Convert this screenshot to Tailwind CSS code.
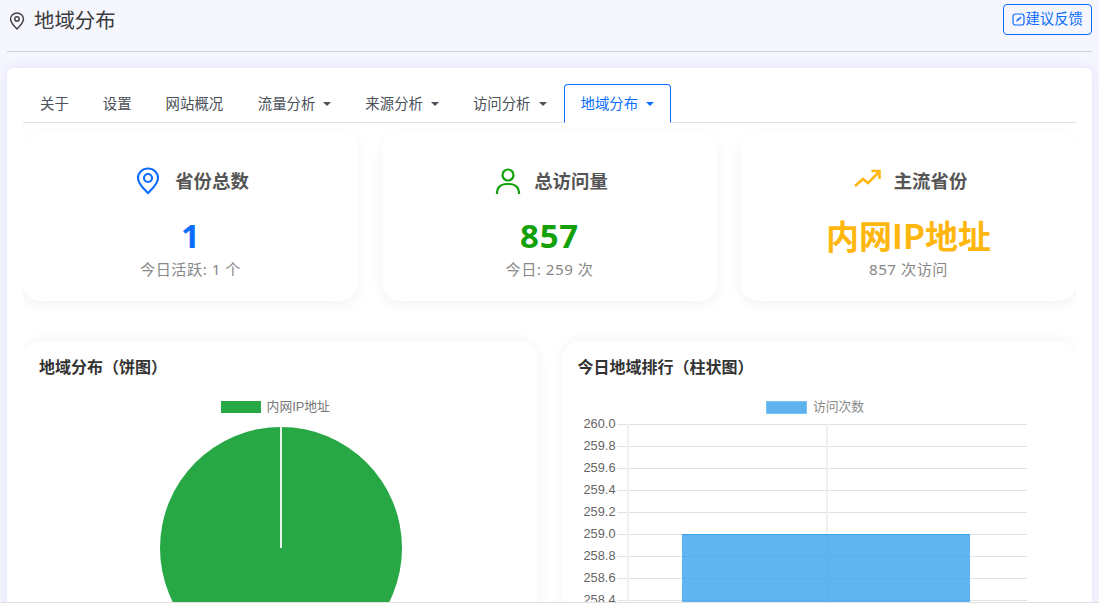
<!DOCTYPE html>
<html lang="zh">
<head>
    <meta charset="UTF-8">
    <title>地域分布</title>
    <script src="https://cdn.jsdelivr.net/npm/@tailwindcss/browser@4"></script>
</head>
<body class="h-[608px] overflow-hidden bg-white font-['Liberation_Sans','Noto_Sans_CJK_SC',sans-serif] text-[#333]">
    <div class="h-[603px] overflow-hidden px-[7px] bg-[#f6f6ff] border-b border-[#e0e0e0]">
        <!-- page title -->
        <header class="flex justify-between h-[52px] border-b border-[#cfcfdc]">
            <div class="flex items-center h-[42px] pl-[2px] gap-[9px]">
                <svg class="w-4 h-[18px]" viewBox="0 0 16 18" fill="none" stroke="#444" stroke-width="1.5">
                    <path d="M8 17C5 14 1.500 10.500 1.500 7a6.500 6 0 0 1 13 0C14.500 10.500 11 14 8 17Z"/>
                    <circle cx="8" cy="7" r="2.200"/>
                </svg>
                <h1 class="text-[20.4px] leading-[44px] text-[#3a3a3a]">地域分布</h1>
            </div>
            <a class="flex items-center h-[31px] mt-1 px-2 border border-[#0d6efd] rounded text-[14.4px] text-[#0d6efd]">
                <svg class="w-[13px] h-[13px]" viewBox="0 0 13 13" fill="none" stroke="#0d6efd" stroke-width="1.200">
                    <rect x="1" y="1" width="11" height="11" rx="2.500"/>
                    <path d="M4 9l1-2.500L8.500 3.500l1 1L6.500 7.500Z" fill="#0d6efd" stroke="none"/>
                </svg>
                建议反馈
            </a>
        </header>

        <main class="mt-4 bg-white rounded-md px-4 pt-4 h-[600px] shadow-[0_0_12px_rgba(90,90,255,0.14)] overflow-hidden">
            <!-- tabs -->
            <nav class="flex h-[39px] border-b border-[#dee2e6] text-[14.4px] leading-[20px] text-[#495057]">
                <a class="px-[17px] pt-[10px]">关于</a>
                <a class="px-[17px] pt-[10px]">设置</a>
                <a class="px-[17px] pt-[10px]">网站概况</a>
                <a class="flex items-start ml-[0.6px] px-[17px] pt-[10px]">流量分析<i class="mt-[8px] ml-2 border-x-[4px] border-t-[4px] border-x-transparent border-t-[#495057]"></i></a>
                <a class="flex items-start px-[17px] pt-[10px]">来源分析<i class="mt-[8px] ml-2 border-x-[4px] border-t-[4px] border-x-transparent border-t-[#495057]"></i></a>
                <a class="flex items-start px-[17px] pt-[10px]">访问分析<i class="mt-[8px] ml-2 border-x-[4px] border-t-[4px] border-x-transparent border-t-[#495057]"></i></a>
                <a class="flex items-start h-[39px] px-4 pt-[9px] border border-[#0d6efd] border-b-white rounded-t text-[#0d6efd] bg-white">地域分布<i class="mt-[8px] ml-2 border-x-[4px] border-t-[4px] border-x-transparent border-t-[#0d6efd]"></i></a>
            </nav>

            <div class="overflow-hidden pb-6">
                <!-- stat cards -->
                <section class="grid grid-cols-3 gap-6 mt-2 font-['Noto_Sans','Noto_Sans_CJK_SC',sans-serif]">
                    <div class="h-[170px] rounded-[18px] bg-white shadow-[0_4px_14px_rgba(0,0,0,0.05)] flex flex-col items-center pt-[35px]">
                        <div class="flex items-center h-[30px] pl-[4px] gap-[15px]">
                            <svg class="w-[24px] h-[28px]" viewBox="0 0 24 28" fill="none" stroke="#0d6efd" stroke-width="2.200">
                                <path d="M12 26C8 22 2 17 2 11a10 9.500 0 0 1 20 0C22 17 16 22 12 26Z"/>
                                <circle cx="12" cy="11" r="4"/>
                            </svg>
                            <h3 class="text-[18.4px] font-bold text-[#555]">省份总数</h3>
                        </div>
                        <div class="mt-[16px] text-[33px] leading-[47px] font-bold text-[#0d6efd]">1</div>
                        <p class="text-[15.2px] leading-[20px] tracking-[0.5px] text-[#888]">今日活跃: 1 个</p>
                    </div>
                    <div class="h-[170px] rounded-[18px] bg-white shadow-[0_4px_14px_rgba(0,0,0,0.05)] flex flex-col items-center pt-[35px]">
                        <div class="flex items-center h-[30px] pl-[4px] gap-[13px]">
                            <svg class="w-[26px] h-[28px]" viewBox="0 0 26 28" fill="none" stroke="#14a008" stroke-width="2.200">
                                <circle cx="13" cy="8" r="5.500"/>
                                <path d="M2 27v-2a9 8 0 0 1 9-8h4a9 8 0 0 1 9 8v2"/>
                            </svg>
                            <h3 class="text-[18.4px] font-bold text-[#555]">总访问量</h3>
                        </div>
                        <div class="mt-[16px] text-[33px] leading-[47px] tracking-[0.8px] font-bold text-[#14a008]">857</div>
                        <p class="text-[15.2px] leading-[20px] tracking-[0.5px] text-[#888]">今日: 259 次</p>
                    </div>
                    <div class="h-[170px] rounded-[18px] bg-white shadow-[0_4px_14px_rgba(0,0,0,0.05)] flex flex-col items-center pt-[35px]">
                        <div class="flex items-center h-[30px] pl-[4px] gap-[13px]">
                            <svg class="w-[27px] h-[28px]" viewBox="0 0 27 28" fill="none" stroke="#ffb70f" stroke-width="2.500">
                                <path d="M1 19l8-7 5 4L25 5"/>
                                <path d="M18 4h8v8" transform="translate(-0.500 0)"/>
                            </svg>
                            <h3 class="text-[18.4px] font-bold text-[#555]">主流省份</h3>
                        </div>
                        <div class="mt-[16px] text-[33px] leading-[47px] font-bold text-[#ffb70f] font-['Noto_Sans_CJK_SC',sans-serif]">内网IP地址</div>
                        <p class="text-[15.2px] leading-[20px] tracking-[0.5px] text-[#888]">857 次访问</p>
                    </div>
                </section>

                <!-- charts -->
                <section class="grid grid-cols-2 gap-6 mt-10">
                    <div class="h-[400px] rounded-[18px] bg-white shadow-[0_0_14px_rgba(0,0,0,0.05)] px-4 pt-4">
                        <h3 class="text-[16px] leading-[22px] font-bold text-[#333]">地域分布（饼图）</h3>
                        <div class="flex justify-center items-center gap-[6px] mt-[20px] h-4 pr-[10px]">
                            <i class="w-[40px] h-[12px] bg-[#28a745]"></i>
                            <span class="text-[12.8px] text-[#777]">内网IP地址</span>
                        </div>
                        <div class="relative w-[242px] h-[242px] ml-[121px] mt-[12px] rounded-full bg-[#28a745]">
                            <i class="absolute left-[120px] top-0 w-[2px] h-[121px] bg-[#e6f3e8]"></i>
                        </div>
                    </div>
                    <div class="h-[400px] rounded-[18px] bg-white shadow-[0_0_14px_rgba(0,0,0,0.05)] px-4 pt-4">
                        <h3 class="text-[16px] leading-[22px] font-bold text-[#333]">今日地域排行（柱状图）</h3>
                        <div class="flex justify-center items-center gap-[6px] mt-[20px] h-4 w-[530px] -ml-[16px] pr-[23px]">
                            <i class="w-[41px] h-[13px] bg-[#5eb2ee] border border-[#7cc2f3]"></i>
                            <span class="text-[12.8px] text-[#888]">访问次数</span>
                        </div>
                        <!-- bar chart, one row per tick -->
                        <div class="relative w-[465px] -ml-[16px] -mt-[2px] text-[12.8px] leading-[22px] text-[#666]">
                            <div class="flex items-center h-[22px]"><span class="w-[54px] text-right">260.0</span><i class="ml-[1px] flex-1 h-px bg-[#e2e2e2]"></i></div>
                            <div class="flex items-center h-[22px]"><span class="w-[54px] text-right">259.8</span><i class="ml-[1px] flex-1 h-px bg-[#e2e2e2]"></i></div>
                            <div class="flex items-center h-[22px]"><span class="w-[54px] text-right">259.6</span><i class="ml-[1px] flex-1 h-px bg-[#e2e2e2]"></i></div>
                            <div class="flex items-center h-[22px]"><span class="w-[54px] text-right">259.4</span><i class="ml-[1px] flex-1 h-px bg-[#e2e2e2]"></i></div>
                            <div class="flex items-center h-[22px]"><span class="w-[54px] text-right">259.2</span><i class="ml-[1px] flex-1 h-px bg-[#e2e2e2]"></i></div>
                            <div class="flex items-center h-[22px]"><span class="w-[54px] text-right">259.0</span><i class="ml-[1px] flex-1 h-px bg-[#e2e2e2]"></i></div>
                            <div class="flex items-center h-[22px]"><span class="w-[54px] text-right">258.8</span><i class="ml-[1px] flex-1 h-px bg-[#e2e2e2]"></i></div>
                            <div class="flex items-center h-[22px]"><span class="w-[54px] text-right">258.6</span><i class="ml-[1px] flex-1 h-px bg-[#e2e2e2]"></i></div>
                            <div class="flex items-center h-[22px]"><span class="w-[54px] text-right">258.4</span><i class="ml-[1px] flex-1 h-px bg-[#e2e2e2]"></i></div>
                            <i class="absolute left-[65px] top-[11px] bottom-0 w-[2px] bg-[#f0f0f0]"></i>
                            <i class="absolute left-[264px] top-[11px] bottom-0 w-[2px] bg-[#f0f0f0]"></i>
                            <div class="absolute left-[120px] top-[121px] w-[288px] h-[100px] bg-[#36a2eb]/80 border-t border-[#36a2eb]"></div>
                        </div>
                    </div>
                </section>
            </div>
        </main>
    </div>
</body>
</html>
